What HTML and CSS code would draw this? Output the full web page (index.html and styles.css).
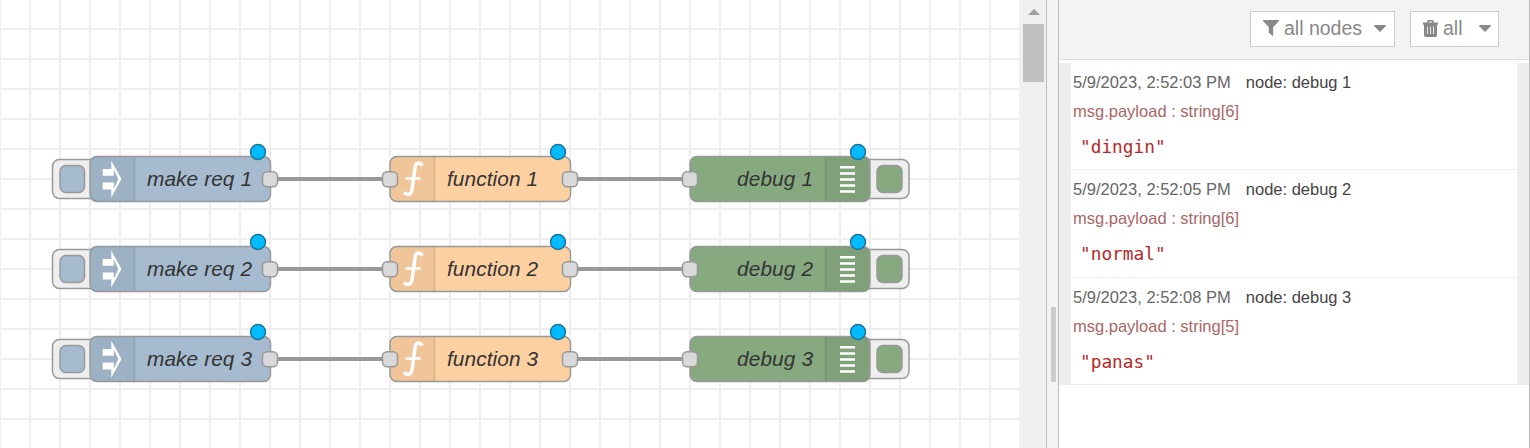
FILE: index.html
```
<!DOCTYPE html>
<html lang="en">
<head>
<meta charset="utf-8">
<title>Flow editor</title>
<link rel="stylesheet" href="styles.css">
</head>
<body>
<div class="editor">
  <main class="workspace">
    <svg class="canvas" width="1019" height="448" viewBox="0 0 1019 448">
      <defs>
        <pattern id="grid" width="30" height="30" patternUnits="userSpaceOnUse" x="-1" y="-2">
          <path class="grid-line" d="M1 0V30M0 1H30"/>
        </pattern>
        <g id="port"><rect class="port" x="-7.5" y="-7.5" width="15" height="15" rx="4.5"/></g>
        <g id="changed"><circle class="changed" r="7.5"/></g>
        <g id="row">
          <path class="wire" d="M270 179H390M570 179H690"/>
          <rect class="button" x="52.5" y="159.500" width="48" height="39" rx="7"/>
          <rect class="inject outline" x="60" y="165.500" width="24.500" height="27" rx="6"/>
          <rect class="inject outline" x="90" y="156.500" width="180.500" height="45" rx="7"/>
          <path class="shade" d="M134 157V201H97Q91 201 91 195V163Q91 157 97 157Z"/>
          <path class="divider" d="M134.500 157V201"/>
          <path class="glyph" d="M102.700 169H111.300V160.700L121.500 179L111.300 197.500V189.500H102.700V182.500H113.800V189L118.300 179L113.800 169.500V175.700H102.700Z"/>
          <use href="#port" x="270" y="179.300"/>
          <use href="#changed" x="258" y="152"/>

          <rect class="function outline" x="390" y="156.500" width="180.500" height="45" rx="7"/>
          <path class="shade" d="M434 157V201H397Q391 201 391 195V163Q391 157 397 157Z"/>
          <path class="divider" d="M434.500 157V201"/>
          <path class="fn" d="M422.500 165.500C420 162 415.500 161.500 415 168L412.300 188C411.500 195.500 407.500 195.500 403.800 192.500"/>
          <path class="fn-bar" d="M405.500 178.500H420.500"/>
          <use href="#port" x="390" y="179.300"/>
          <use href="#port" x="570" y="179.300"/>
          <use href="#changed" x="558" y="152"/>

          <rect class="button" x="860" y="159.500" width="49" height="39" rx="7"/>
          <rect class="debug outline" x="877" y="165.500" width="25" height="27" rx="6"/>
          <rect class="debug outline" x="690" y="156.500" width="180" height="45" rx="7"/>
          <path class="shade" d="M826 157V201H863Q869 201 869 195V163Q869 157 863 157Z"/>
          <path class="divider" d="M825.500 157V201"/>
          <path class="bars" d="M840 167.300H855M840 173.400H855M840 179.400H855M840 185.500H855M840 191.500H855"/>
          <use href="#port" x="690" y="179.300"/>
          <use href="#changed" x="858" y="152"/>
        </g>
      </defs>
      <rect width="1019" height="448" fill="url(#grid)"/>
      <use href="#row"/>
      <use href="#row" y="90"/>
      <use href="#row" y="180"/>
      <g class="label">
        <text x="147" y="186" textLength="105">make req 1</text>
        <text x="447" y="186" textLength="91">function 1</text>
        <text x="737" y="186" textLength="76">debug 1</text>
        <text x="147" y="276" textLength="105">make req 2</text>
        <text x="447" y="276" textLength="91">function 2</text>
        <text x="737" y="276" textLength="76">debug 2</text>
        <text x="147" y="366" textLength="105">make req 3</text>
        <text x="447" y="366" textLength="91">function 3</text>
        <text x="737" y="366" textLength="76">debug 3</text>
      </g>
    </svg>
  </main>
  <div class="scrollbar">
    <svg class="scroll-arrow" width="12" height="6" viewBox="0 0 12 6"><path d="M0 6L6 0L12 6Z"/></svg>
    <div class="scroll-thumb"></div>
  </div>
  <div class="separator"><div class="handle"></div></div>
  <aside class="sidebar">
    <header class="toolbar">
      <div class="select filter">
        <svg width="16" height="16" viewBox="0 0 16 16"><path d="M.3 0H15.700Q16.300.8 15.600 1.500L10.200 7V15.200Q9.900 16 9.200 15.600L6.200 13Q5.800 12.700 5.800 12.200V7L.4 1.500Q-.3.8.3 0Z"/></svg>
        <span class="select-text">all nodes</span>
        <svg class="caret" width="12" height="7" viewBox="0 0 12 7"><path d="M.5 0H11.500Q12.200.5 11.600 1.200L6.600 6.400Q6 7 5.400 6.400L.4 1.200Q-.2.5.5 0Z"/></svg>
      </div>
      <div class="select clear">
        <svg width="15" height="17" viewBox="0 0 15 17"><path fill-rule="evenodd" d="M0 2.500H3.800L4.500.8Q5 0 6 0H9Q10 0 10.500.8L11.200 2.500H15V4.800H14V15Q14 17 12.300 17H2.700Q1 17 1 15V4.800H0ZM5.400 2.500H9.600L9 1.400H6ZM4 6.500V14H4.800V6.500ZM7.100 6.500V14H7.900V6.500ZM10.200 6.500V14H11V6.500Z"/></svg>
        <span class="select-text">all</span>
        <svg class="caret" width="12" height="7" viewBox="0 0 12 7"><path d="M.5 0H11.500Q12.200.5 11.600 1.200L6.600 6.400Q6 7 5.400 6.400L.4 1.200Q-.2.5.5 0Z"/></svg>
      </div>
    </header>
    <div class="messages">
      <article class="message">
        <div class="meta"><span class="date">5/9/2023, 2:52:03 PM</span><span class="name">node: debug 1</span></div>
        <div class="topic">msg.payload : string[6]</div>
        <div class="payload">"dingin"</div>
      </article>
      <article class="message tall">
        <div class="meta"><span class="date">5/9/2023, 2:52:05 PM</span><span class="name">node: debug 2</span></div>
        <div class="topic">msg.payload : string[6]</div>
        <div class="payload">"normal"</div>
      </article>
      <article class="message">
        <div class="meta"><span class="date">5/9/2023, 2:52:08 PM</span><span class="name">node: debug 3</span></div>
        <div class="topic">msg.payload : string[5]</div>
        <div class="payload">"panas"</div>
      </article>
    </div>
  </aside>
</div>
</body>
</html>
```
FILE: styles.css
```
* { box-sizing: border-box; }
body { margin: 0; background: #fff; font-family: "Liberation Sans", Arial, sans-serif; }
svg { display: block; flex: none; }
.editor { display: flex; width: 1530px; height: 448px; overflow: hidden; }
.workspace { width: 1019px; flex: none; }

.grid-line { stroke: #eee; stroke-width: 2; fill: none; }
.wire { stroke: #999; stroke-width: 4; fill: none; }
.port { fill: #d9d9d9; stroke: #999; stroke-width: 1.5; }
.changed { fill: #00bcff; stroke: #1d7399; stroke-width: 1.5; }
.button { fill: #eee; stroke: #999; stroke-width: 1.5; }
.outline { stroke: #999; stroke-width: 1.5; }
.inject { fill: #a6bbcf; }
.function { fill: #fdd0a2; }
.debug { fill: #87a980; }
.shade { fill: #000; fill-opacity: .05; }
.divider { stroke: #000; stroke-opacity: .13; stroke-width: 1.5; }
.glyph { fill: #fff; }
.fn { fill: none; stroke: #fff; stroke-width: 3.5; }
.fn-bar { stroke: #fff; stroke-width: 2.6; }
.bars { stroke: #fff; stroke-width: 2.5; }
.label { font-size: 20.800px; font-style: italic; fill: #333; }

.scrollbar { display: flex; flex-direction: column; align-items: center; width: 27px; flex: none; padding: 9px 0 0 2px; background: #f0f0f0; }
.scroll-arrow { fill: #a0a0a0; }
.scroll-thumb { width: 21px; height: 58px; margin-top: 9px; background: #c1c1c1; }
.separator { width: 13px; flex: none; padding: 307px 0 0 4px; border: solid #bbb; border-width: 0 1px; background: #f3f3f3; }
.handle { width: 5px; height: 75px; background: #ccc; }

.sidebar { width: 471px; flex: none; border-right: 1px solid #bbb; }
.toolbar { display: flex; justify-content: flex-end; align-items: flex-start; gap: 15px; height: 60px; padding: 11px 30px 0 0; border-bottom: 1px solid #ddd; background: #f3f3f3; }
.select { display: flex; align-items: center; height: 36px; padding-bottom: 2px; border: 1px solid #ccc; background: #fff; color: #888; fill: #888; font-size: 19.5px; line-height: 32px; }
.filter { width: 145px; padding-left: 12px; padding-right: 8px; }
.clear { width: 89px; padding-left: 12px; padding-right: 7px; }
.select-text { margin-left: 5px; }
.caret { margin-left: auto; }

.messages { margin-top: 3px; border: solid #eee; border-width: 0 12px; }
.message { height: 107px; padding: 6px 0 0 2px; border-bottom: 1px solid #eee; font-size: 16.5px; white-space: nowrap; }
.tall { height: 108px; }
.meta { display: flex; gap: 15px; height: 26px; line-height: 26px; }
.date { color: #666; }
.name { color: #444; }
.topic { height: 33px; line-height: 33px; color: #a66; }
.payload { height: 37px; padding-left: 7px; line-height: 37px; font-family: "DejaVu Sans Mono", monospace; font-size: 17.8px; color: #b72828; }
```
